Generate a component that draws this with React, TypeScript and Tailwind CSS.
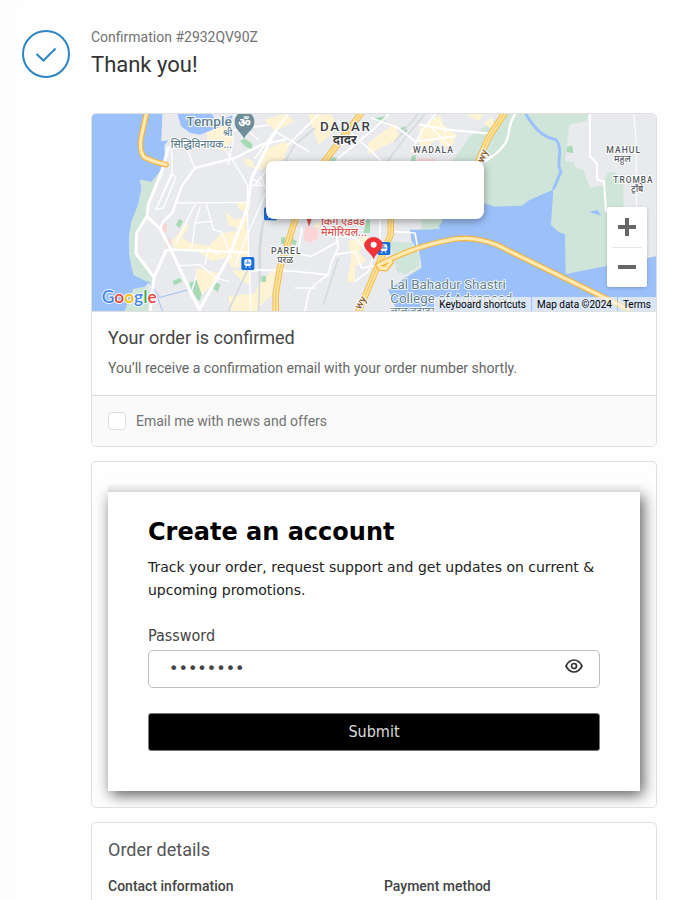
import { useState } from "react";

const ROAD = { fill: "none", stroke: "#ffffff", strokeLinecap: "round", strokeLinejoin: "round" } as const;

function Highway({ d }: { d: string }) {
  return (
    <g fill="none" strokeLinecap="round" strokeLinejoin="round">
      <path d={d} stroke="#f3b43f" strokeWidth="17" />
      <path d={d} stroke="#fee9b0" strokeWidth="10" />
    </g>
  );
}

function Avenue({ d }: { d: string }) {
  return (
    <g fill="none" strokeLinecap="butt" strokeLinejoin="round">
      <path d={d} stroke="#f3b43f" strokeWidth="19" />
      <path d={d} stroke="#fee39a" strokeWidth="14" />
      <path d={d} stroke="#f3b43f" strokeWidth="2" />
    </g>
  );
}

function Station({ x, y }: { x: number; y: number }) {
  return (
    <g transform={`translate(${x} ${y})`}>
      <rect width="39" height="39" rx="5" fill="#1a6fe0" />
      <rect x="9" y="7" width="21" height="20" rx="5" fill="#ffffff" />
      <path d="M19.500 9v8M12 18h15" stroke="#1a6fe0" strokeWidth="3" />
      <path d="M12 33l4-5M27 33l-4-5" stroke="#ffffff" strokeWidth="3" />
    </g>
  );
}

function MapDrawing() {
  return (
    <svg
      className="absolute inset-0 h-full w-full"
      viewBox="0 18 1692 591"
      preserveAspectRatio="xMidYMid slice"
      role="img"
      aria-label="Map of the delivery address"
      fontFamily="Roboto, 'Noto Sans', sans-serif"
    >
      <rect y="18" width="1692" height="591" fill="#e8eaed" />

      {/* west shore */}
      <g transform="translate(-21 0)">
        <path fill="#9cc0f9" d="M21 18H232L229 100L250 97L238 112L240 172L200 222L165 215L170 240L160 290L140 340L133 380V440L145 500L175 515L195 522L175 540L145 545L135 570L120 609H21Z" />
        <path fill="#d0e5d9" d="M165 215L200 222L238 172L215 230L185 320L155 375V440L205 505L200 528L175 515L145 500L133 440V380L140 340L160 290L170 240ZM145 542L190 535L195 609H120Z" />
        <path fill="#9cc0f9" d="M278 18H380L395 40L442 22L440 55L390 62L345 80L315 74L288 55Z" />
        <g fill="#fef3d3">
          <path d="M365 75L430 45L445 90L420 130L370 110ZM475 150L500 155L510 180L485 175ZM530 130L600 100V150L560 180L520 185ZM420 310L450 335L488 325L480 370L430 350ZM455 285L495 278L490 320L460 300ZM410 375L490 365V480L440 478L420 450L380 460L340 430L270 425L290 390L320 405L370 415ZM260 400L305 345L312 355L270 425ZM335 480L400 495L390 525L350 560L330 530ZM440 485L498 490V530L470 520ZM430 565L520 555V609H440Z" />
        </g>
        <g fill="#a8dab5">
          <path d="M273 352L282 332L294 340L284 360ZM312 525L335 515L350 560L343 580L325 560ZM262 520L285 510L292 520L268 532ZM382 540L392 522L406 530L398 552ZM530 505H543V522H530ZM588 390L600 386V408H590ZM465 98L480 92L503 108L500 125L480 115Z" />
        </g>
        <path fill="#fbd5d5" d="M232 345L247 348L245 372L232 370ZM237 388L255 392L258 410L245 420Z" />
        <path d="M190 520L225 568L330 540M215 560L232 609" fill="none" stroke="#9cc0f9" strokeWidth="3" />
        <g {...ROAD} strokeWidth="9">
          <path d="M600 20L560 90L500 210L487 300L430 450L343 605M250 120L230 190L190 290L186 325L155 375L153 437L207 508L195 609M186 325L225 362L258 425L320 560L345 609M207 508L243 428" />
          <path d="M243 428L258 425L490 433M225 362L235 340L262 315L290 235L330 180L400 162L450 150L530 110L600 95" strokeWidth="7" />
        </g>
        <g {...ROAD} strokeWidth="4">
          <path d="M300 110L330 180M260 120L262 190L215 300M265 200L272 210L235 300L212 305L262 200M270 285L495 283M487 230V310L497 609M330 290L275 400M365 290L385 365L410 372L440 450M345 300L330 345L320 425M330 345L382 340M285 473L345 470L395 510L430 520M425 130L470 200L487 232H530M500 210L545 240M530 210L545 250L500 350L450 470M498 490L600 485M360 470L370 420L400 440M430 70L480 60L520 95M445 90L430 170M450 20L485 60L560 50M343 595L320 550L335 500" />
        </g>
        <g fill="none" stroke="#d6d9dd" strokeWidth="5">
          <path d="M540 330C515 410 535 470 520 609M495 470L430 609M535 340L525 430" />
        </g>
        <Highway d="M184 18L168 90Q162 130 178 148L210 161L243 170" />
      </g>

      {/* east shore */}
      <g transform="translate(1044 0)">
        <path fill="#d0e5d9" d="M195 18H445L440 40L388 50L375 160L400 162L408 180L430 185L450 240L490 232L500 195L520 192L550 210V300L560 470L377 498L120 310L-30 335L-50 362L40 155L90 85Z" />
        <path fill="#d0e5d9" d="M-60 362L-85 400L-60 440L-55 475L-120 520L-80 530L0 480L0 350Z" />
        <path fill="#9cc0f9" d="M-10 340L131 285L165 296L245 293L265 278L300 262L340 245L333 350L355 372L375 378L377 498L530 468L648 445V609H-130L-155 545L-105 510L-55 480L-60 440L-85 400L-90 365L-50 365L0 362Z" />
        <path fill="#d0e5d9" d="M-150 400L-80 405L-60 440L-62 475L-105 500L-130 490ZM-55 335L10 335L0 350L-25 365L-55 360Z" />
        <path fill="#9cc0f9" d="M447 312L472 306L485 323Z" />
        <path fill="none" stroke="#9cc0f9" strokeWidth="9" strokeLinejoin="round" d="M255 14Q275 48 295 68T348 95Q362 110 358 145T363 190L340 245" />
        <path fill="#a8dab5" d="M380 118L396 112L400 135L380 132Z" />
        <path fill="#fef3d3" d="M-60 60L0 20L10 50L50 80L30 120L0 85L-50 125L-65 100ZM130 45L155 28L165 50L150 60ZM80 18H130L115 40Z" />
        <g {...ROAD} strokeWidth="7">
          <path d="M-60 50L20 65L150 77M225 18Q210 40 205 80T135 160" />
          <path d="M450 18V145L470 165L472 215L492 220L498 310" strokeWidth="6" />
          <path d="M582 18L588 100L590 298M-30 20L20 65L0 110" strokeWidth="3" />
        </g>
        <Avenue d="M195 14L145 90L110 170" />
      </g>

      {/* city centre */}
      <g transform="translate(489 0)">
        <g fill="#fef3d3">
          <path d="M30 35L90 18L120 40L60 70ZM45 125L110 100L80 160H30ZM160 20H230L250 60L190 110ZM340 105L420 45L435 90L340 140ZM280 400L340 385L335 410L310 430L335 460L300 475V525L275 520L290 450ZM20 520L60 480L50 560L0 609V550ZM180 350L200 335L180 400L160 380ZM530 75L600 105L570 120Z" />
        </g>
        <g fill="#a8dab5">
          <path d="M78 392H90V408H78ZM110 392L125 398L122 412L108 408ZM20 505H33V522H20ZM230 148L245 150L240 160H225ZM430 62L450 55L458 70L445 76ZM470 145L482 140V160H468ZM335 335H345V375H325Z" />
          <path d="M360 30L392 24L388 42L362 40Z" />
        </g>
        <path fill="#fbd5d5" d="M150 355L190 360L190 390L165 405L145 395ZM490 152H540V160H480Z" />
        <g fill="none" stroke="#d6d9dd" strokeWidth="5">
          <path d="M510 18L450 90L390 170M490 18L420 100M180 60L120 110L90 160M25 340C0 430 20 500 10 609M250 450L205 590" />
        </g>
        <g {...ROAD} strokeWidth="5">
          <path d="M0 150L60 70L100 18M60 70L160 130M250 40L350 130L380 160M400 20L360 60L250 150M350 30L430 60L480 100L600 85M530 60L590 120M540 20L500 70L470 130M0 230L40 180L130 160M100 110L190 20M0 485L120 490L215 500M240 360L250 420Q230 450 220 500Q160 540 160 560L150 609M240 440L300 430L320 480L380 470M375 335V390L340 490L300 520M405 370L480 375L490 430M210 380L300 390L340 430M90 430L170 445L250 400M140 360L130 430M120 540L180 540" />
        </g>
        <Avenue d="M320 14L205 165M122 330L75 480L62 560V612" />
        <Avenue d="M408 330L407 380L370 470L310 612" />
        <Highway d="M375 480L392 482L408 462M370 472Q480 412 600 393Q640 388 680 397Q720 405 760 428L1120 604" />
      </g>

      {/* place labels */}
      <g stroke="#ffffff" strokeWidth="6" strokeLinejoin="round" paintOrder="stroke">
        <g fill="#5f7f8e" fontSize="41" fontWeight="500">
          <text x="283" y="54">Temple</text>
          <text x="392" y="84" fontSize="29">श्री</text>
          <text x="236" y="120" fontSize="31">सिद्धिविनायक...</text>
        </g>
        <g fill="#3c4043" fontWeight="500">
          <text x="684" y="69" fontSize="40" letterSpacing="5">DADAR</text>
          <text x="722" y="108" fontSize="39" fontWeight="700">दादर</text>
          <g fill="#55595d">
            <text x="963" y="136" fontSize="26" letterSpacing="3">WADALA</text>
            <text x="537" y="438" fontSize="26" letterSpacing="3">PAREL</text>
            <text x="556" y="465" fontSize="27">परळ</text>
            <text x="1543" y="134" fontSize="26" letterSpacing="3">MAHUL</text>
            <text x="1566" y="161" fontSize="27">महुल</text>
            <text x="1564" y="224" fontSize="25" letterSpacing="3">TROMBA</text>
            <text x="1617" y="252" fontSize="27">ट्रॉंबे</text>
          </g>
        </g>
        <g fill="#e0504b" fontSize="32" fontWeight="500">
          <text x="687" y="352">किंग एडवर्ड</text>
          <text x="687" y="383">मेमोरियल...</text>
        </g>
        <g fill="#5f7f8e" fontSize="40" fontWeight="400" strokeWidth="5">
          <text x="895" y="543">Lal Bahadur Shastri</text>
          <text x="895" y="585">College of Advanced</text>
          <text x="895" y="622" fontSize="32">लाल बहादुर</text>
        </g>
        <g fill="#8a5a2c" fontSize="32" fontWeight="500">
          <text transform="translate(1174 166) rotate(-68)">wy</text>
          <text transform="translate(805 606) rotate(-60)">wy</text>
        </g>
      </g>

      <path fill="#6f8d99" d="M456 92C450 74 428 66 428 42C428 22 440 12 457 12S487 22 487 42C487 66 463 74 456 92Z" />
      <text x="438" y="56" fontSize="38" fontWeight="700" fill="#ffffff">ॐ</text>
      <Station x={448} y={447} />
      <Station x={516} y={298} />
      <Station x={856} y={402} />
      <path fill="#e0504b" d="M643 330H660L651 356Z" />
      <path fill="#f3333a" d="M845 453C838 433 817 429 817 409A28 26 0 0 1 872 409C872 429 851 433 845 453Z" stroke="#d62c33" strokeWidth="1" />
      <circle cx="845" cy="410" r="9" fill="#ffffff" />

      <text x="29" y="584" fontSize="52" fontWeight="600" fontFamily="Lato, sans-serif" stroke="#ffffff" strokeWidth="5" paintOrder="stroke">
        <tspan fill="#4285f4">G</tspan>
        <tspan fill="#ea4335">o</tspan>
        <tspan fill="#fbbc04">o</tspan>
        <tspan fill="#4285f4">g</tspan>
        <tspan fill="#34a853">l</tspan>
        <tspan fill="#ea4335">e</tspan>
      </text>
    </svg>
  );
}

function MapPanel() {
  return (
    <div className="relative h-[198px] overflow-hidden rounded-t border-b border-[#e0e0e0]">
      <MapDrawing />
      <div className="absolute top-[47px] left-[174px] h-[58px] w-[218px] rounded-lg bg-white shadow-[0_2px_7px_1px_rgba(0,0,0,0.3)]" />
      <div className="absolute right-[9px] bottom-6 flex h-20 w-10 flex-col items-center rounded-xs bg-white text-[#666666] shadow-[0_1px_4px_-1px_rgba(0,0,0,0.3)]">
        <button type="button" aria-label="Zoom in" className="flex w-full flex-1 items-center justify-center">
          <svg className="size-[18px]" viewBox="0 0 18 18" stroke="currentColor" strokeWidth="4"><path d="M9 0v18M0 9h18" /></svg>
        </button>
        <div className="h-px w-[30px] bg-[#e6e6e6]" />
        <button type="button" aria-label="Zoom out" className="flex w-full flex-1 items-center justify-center">
          <svg className="size-[18px]" viewBox="0 0 18 18" stroke="currentColor" strokeWidth="4"><path d="M0 9h18" /></svg>
        </button>
      </div>
      <div className="absolute right-0 bottom-0 flex h-[14px] items-center gap-px text-[10px] leading-[14px] text-black">
        <button type="button" className="bg-[#f5f5f5]/70 px-[5px] pt-px">Keyboard shortcuts</button>
        <span className="bg-[#f5f5f5]/70 px-[5px] pt-px">Map data ©2024</span>
        <a href="#terms" className="bg-[#f5f5f5]/70 px-[5px] pt-px">Terms</a>
      </div>
    </div>
  );
}

function AccountForm() {
  const [visible, setVisible] = useState(false);
  return (
    <section className="overflow-hidden rounded-[5px] border border-[#e0e0e0] px-4 pt-[17px] pb-4">
      <div className="relative z-10 h-[13px] rounded-t-lg bg-linear-to-b from-[#fefefe] from-30% to-[#d9d9d9]" />
      <form
        className="bg-white px-10 pt-[26px] pb-10 font-['DejaVu_Sans',sans-serif] shadow-[3px_4px_14px_rgba(0,0,0,0.65)]"
        onSubmit={(e) => e.preventDefault()}
      >
        <h2 className="text-2xl leading-7 font-bold text-black">Create an account</h2>
        <p className="mt-[10px] text-sm leading-[23px] text-[#222222]">
          Track your order, request support and get updates on current &amp; upcoming promotions.
        </p>
        <div className="font-['DejaVu_Sans_Condensed','DejaVu_Sans',sans-serif]">
          <label htmlFor="password" className="mt-6 block text-base leading-5 text-[#444444]">Password</label>
          <div className="relative mt-1">
            <input
              id="password"
              type={visible ? "text" : "password"}
              defaultValue="password"
              className="block h-[38px] w-full rounded-[5px] border border-[#bdbdbd] bg-white pr-12 pb-[2px] pl-5 font-['DejaVu_Sans',sans-serif] text-base text-[#444444]"
            />
            <button
              type="button"
              aria-label="Show password"
              onClick={() => setVisible(!visible)}
              className="absolute top-[6px] right-4 flex size-5 items-center justify-center text-[#333333]"
            >
              <svg className="size-5" viewBox="0 0 20 20" fill="none" stroke="currentColor" strokeWidth="1.700">
                <path d="M2 10C4 6 7 4 10 4s6 2 8 6c-2 4-5 6-8 6s-6-2-8-6Z" />
                <circle cx="10" cy="10" r="2.500" />
              </svg>
            </button>
          </div>
          <button type="submit" className="mt-[25px] block h-[38px] w-full rounded-[3px] border border-[#777777] bg-black text-base text-[#dddddd]">
            Submit
          </button>
        </div>
      </form>
    </section>
  );
}

export default function App() {
  return (
    <div className="min-h-screen bg-[#fdfdfd] pl-[14px] font-[Roboto,sans-serif]">
      <main className="min-h-screen rounded-tl-2xl bg-[#fefefe] pt-[26px] pr-[25px] pl-2">
        <header className="flex items-start gap-[21px]">
          <svg className="mt-1 size-12 shrink-0" viewBox="0 0 48 48" fill="none" stroke="#2d86c3">
            <circle cx="24" cy="24" r="23" strokeWidth="2" />
            <path d="M14.500 24L21.500 30.500L33.500 18.500" strokeWidth="2" />
          </svg>
          <div>
            <p className="text-sm leading-[22px] text-[#737373]">Confirmation #2932QV90Z</p>
            <h1 className="text-[22px] leading-[34px] text-[#333333]">Thank you!</h1>
          </div>
        </header>

        <div className="mt-[31px] ml-[69px] flex flex-col gap-[14px]">
          <section className="rounded-[5px] border border-[#e0e0e0]">
            <MapPanel />
            <div className="px-4 pt-3 pb-4">
              <h2 className="text-lg leading-7 text-[#444444]">Your order is confirmed</h2>
              <p className="mt-[5px] text-sm leading-[22px] text-[#666666]">You’ll receive a confirmation email with your order number shortly.</p>
            </div>
            <label className="flex h-[51px] items-center gap-[10px] rounded-b border-t border-[#dddddd] bg-[#fafafa] px-4 pb-px text-sm text-[#737373]">
              <input type="checkbox" className="size-[18px] appearance-none rounded border border-[#dddddd] bg-white" />
              Email me with news and offers
            </label>
          </section>

          <AccountForm />

          <section className="rounded-[5px] border border-[#e0e0e0] px-4 pt-[13px] pb-6">
            <h2 className="text-lg leading-7 text-[#555555]">Order details</h2>
            <div className="mt-[11px] grid grid-cols-2 gap-5 text-sm leading-[22px] font-medium text-[#444444]">
              <h3>Contact information</h3>
              <h3>Payment method</h3>
            </div>
          </section>
        </div>
      </main>
    </div>
  );
}
